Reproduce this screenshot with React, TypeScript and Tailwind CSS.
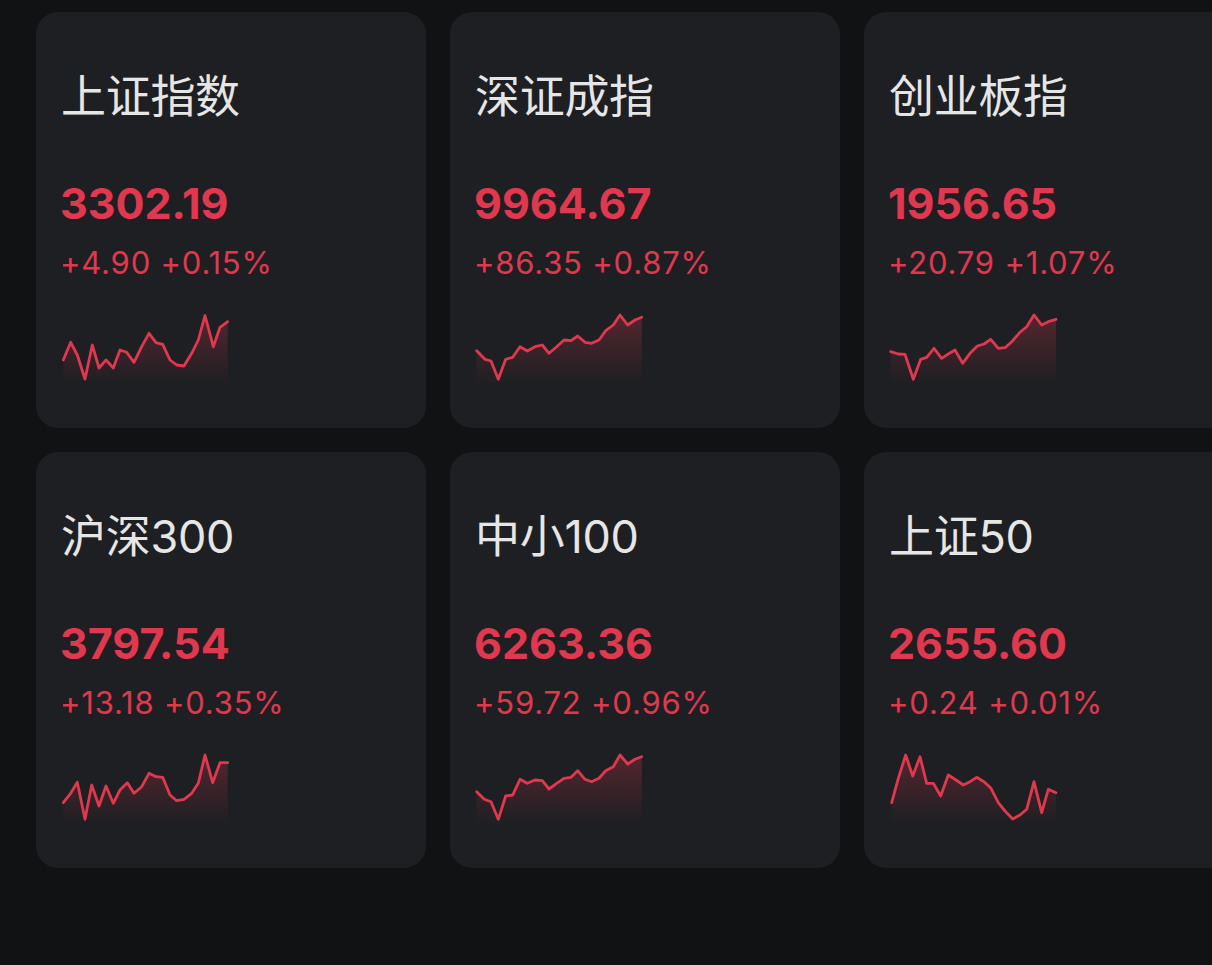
import React from "react";

type P = [number, number];

const data: { name: string; price: string; change: string; pts: P[] }[] = [
  {
    name: "上证指数",
    price: "3302.19",
    change: "+4.90 +0.15%",
    pts: [[1.3,46],[8.7,28.3],[15.3,41],[23,65],[30.3,31],[37,54],[44,46],[51.3,54],[58,36],[64.7,38.3],[72,48.3],[79.7,32.7],[87,19.3],[94,28.7],[100.7,30.3],[108,46],[114.7,51],[122,52],[129.7,39.3],[136.3,26],[143,1.5],[151.3,32.7],[158,13.3],[165.7,7.7]],
  },
  {
    name: "深证成指",
    price: "9964.67",
    change: "+86.35 +0.87%",
    pts: [[0.7,36.7],[9,45.3],[15,47],[22.3,65.3],[29.7,45.3],[36.7,43.3],[44,32.7],[51.3,37],[59,32.7],[66.3,31],[73,39.3],[80.7,32.7],[88,26],[95,26.7],[101.7,22],[109,28.3],[115.7,29.3],[123,26],[129.7,16.7],[137.3,11],[144,1],[151.7,11],[159,6],[165.7,3.3]],
  },
  {
    name: "创业板指",
    price: "1956.65",
    change: "+20.79 +1.07%",
    pts: [[0.7,37.7],[8.3,40],[15,40.3],[23.3,65.3],[30.7,45.3],[36.7,43.3],[44,34.3],[51.7,44.3],[58.3,40],[65,36],[72.7,49.3],[80,39.3],[87.3,32],[94,30],[100.7,25.3],[108.3,34.3],[115,33.7],[121.7,27.7],[130,18.3],[136.7,12.7],[144,1],[151.7,11],[158.3,7.7],[166,5.3]],
  },
  {
    name: "沪深300",
    price: "3797.54",
    change: "+13.18 +0.35%",
    pts: [[1.3,48.7],[8.7,39.3],[15.3,28.3],[23,65.3],[29.7,31],[37,52],[44,32],[51.3,49.3],[58,36],[65.3,28.7],[72,39.3],[79.7,32.7],[87,19.3],[94,22.7],[100.7,23.3],[108,41],[114.7,46.7],[122,45.3],[129.7,39.3],[136.3,29.3],[143,1],[150.7,28.7],[158,8.7],[165.7,8.7]],
  },
  {
    name: "中小100",
    price: "6263.36",
    change: "+59.72 +0.96%",
    pts: [[0.7,37.7],[8.3,45.3],[15,47.7],[22.3,65.3],[29.7,42],[36.7,41],[44,25.3],[51.3,29.3],[59,26],[66.3,26.7],[73,35],[80.7,29.3],[88,24.3],[95,23.3],[101.7,16.7],[109,25.3],[115.7,27.7],[123,24.3],[129.7,16.7],[137.3,12.7],[144,1],[151.7,10],[159,5.3],[165.7,2.7]],
  },
  {
    name: "上证50",
    price: "2655.60",
    change: "+0.24 +0.01%",
    pts: [[1.7,48.7],[8.3,24.3],[15.7,1],[22.7,22],[30,2.7],[36.7,29.3],[43.3,29.3],[50.7,42],[58.3,21],[66,26],[73.3,31],[80,27.7],[86.7,23.3],[94,27.7],[101,34.3],[108.3,48.7],[115,57],[122.7,65],[130,61],[136.7,55.3],[144,27.7],[151.7,58.7],[158.3,35.3],[166,38.7]],
  },
];

function Spark({ pts, id }: { pts: P[]; id: string }) {
  const line = pts.map((p) => `${p[0]},${p[1]}`).join(" ");
  const first = pts[0];
  const last = pts[pts.length - 1];
  const area = `M${first[0]},70 L${line.replace(/ /g, " L")} L${last[0]},70 Z`;
  return (
    <svg width="168" height="70" viewBox="0 0 168 70" className="block overflow-visible">
      <defs>
        <linearGradient id={id} x1="0" y1="0" x2="0" y2="1">
          <stop offset="0%" stopColor="#e0384f" stopOpacity="0.28" />
          <stop offset="100%" stopColor="#e0384f" stopOpacity="0" />
        </linearGradient>
      </defs>
      <path d={area} fill={`url(#${id})`} />
      <polyline
        points={line}
        fill="none"
        stroke="#e0384f"
        strokeWidth="2.8"
        strokeLinejoin="round"
        strokeLinecap="round"
      />
    </svg>
  );
}

export default function App() {
  return (
    <div
      className="w-[1212px] h-[965px] bg-[#111214] overflow-hidden pt-[12px] pl-[36px]"
      style={{ fontFamily: 'Inter, "Noto Sans CJK SC", sans-serif' }}
    >
      <div className="grid grid-cols-[390px_390px_390px] gap-[24px] w-[1218px]">
        {data.map((d, i) => (
          <div
            key={i}
            className="h-[416px] rounded-[22px] bg-[#1e1f22] pl-[26px] pt-[55px] flex flex-col"
          >
            <div className="-ml-[1px] text-[45px] leading-[60px] text-[#e6e6e6] tracking-[-0.3px]">{d.name}</div>
            <div className="-ml-[2px] mt-[52px] text-[43px] leading-[48px] font-bold text-[#e0384f]">
              {d.price}
            </div>
            <div className="-ml-[2px] mt-[16px] text-[31px] leading-[40px] text-[#e0384f] tracking-[0.8px]">
              {d.change}
            </div>
            <div className="mt-[31px]">
              <Spark pts={d.pts} id={`g${i}`} />
            </div>
          </div>
        ))}
      </div>
    </div>
  );
}
